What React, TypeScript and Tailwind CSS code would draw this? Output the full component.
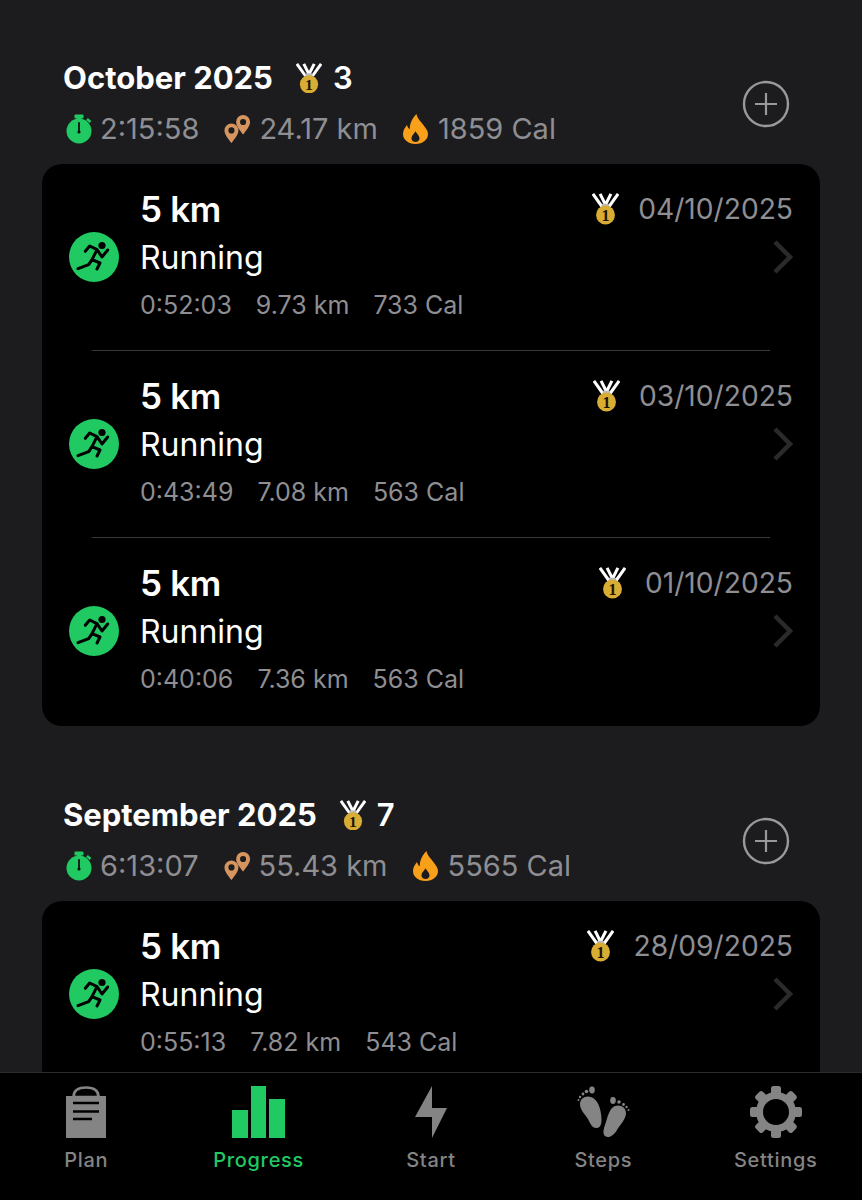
const GREEN = '#20c962';

const Medal = ({ size = 27 }: { size?: number }) => (
  <svg width={size} height={(size * 35) / 30} viewBox="0 0 30 35" className="shrink-0">
    <path d="M1 1 L11 15 M9 1 L15 13 M21 1 L15 13 M29 1 L19 15" stroke="#fff" strokeWidth="3.400" fill="none" />
    <rect x="11" y="12" width="8" height="3.500" fill="#b9b9b9" />
    <circle cx="15" cy="24.500" r="10.500" fill="#d9ad33" />
    <text x="15" y="31" textAnchor="middle" fontSize="18" fontWeight="700" fill="#1c1400" fontFamily="'Liberation Serif', serif">1</text>
  </svg>
);

const Timer = () => (
  <svg width="26" height="30" viewBox="0 0 26 30" className="shrink-0">
    <rect x="8.500" y="0.500" width="9" height="4" rx="1" fill={GREEN} />
    <rect x="11" y="3" width="4" height="4" fill={GREEN} />
    <path d="M21 5 L24.500 8" stroke={GREEN} strokeWidth="2.600" />
    <circle cx="13" cy="17" r="12.500" fill={GREEN} />
    <path d="M13 9 V18" stroke="#111" strokeWidth="1.800" strokeLinecap="round" />
    <circle cx="13" cy="18" r="1.600" fill="#111" />
  </svg>
);

const Pins = () => (
  <svg width="27" height="28" viewBox="0 0 29 30" className="shrink-0">
    <path fillRule="evenodd" fill="#d6955f" d="M8 9a7.500 7.500 0 0 0-7.500 7.500C.5 21 5 26 8 30c3-4 7.500-9 7.500-13.500A7.500 7.500 0 0 0 8 9Zm0 4.200a3.300 3.300 0 1 1 0 6.600 3.300 3.300 0 0 1 0-6.600Z" />
    <path fillRule="evenodd" fill="#d6955f" d="M20.500 0A7.500 7.500 0 0 0 13 7.500c0 4.500 4.500 9.500 7.500 13.500 3-4 7.500-9 7.500-13.500A7.500 7.500 0 0 0 20.500 0Zm0 4.200a3.300 3.300 0 1 1 0 6.600 3.300 3.300 0 0 1 0-6.600Z" />
  </svg>
);

const Flame = () => (
  <svg width="27" height="30" viewBox="0 0 26 30" className="shrink-0">
    <path fillRule="evenodd" fill="#f9a01b" d="M14 0c1 5 4 7 6.500 10.500C23 14 25.500 16.500 25.500 20c0 5.500-5 10-12.500 10S.5 25.500.5 20c0-4 2-6.500 4-9 .5 2 1.200 3.300 2.800 4.300C7 9.500 10 4 14 0Zm-1 17c-.8 2.500-4 4-4 7.500 0 2.300 1.800 3.500 4 3.500s4-1.200 4-3.500c0-3.500-3.200-5-4-7.500Z" />
  </svg>
);

const Runner = () => (
  <svg width="50" height="50" viewBox="0 0 50 50" className="shrink-0">
    <circle cx="25" cy="25" r="25" fill={GREEN} />
    <circle cx="33" cy="13.500" r="3.600" fill="#000" />
    <path d="M28 17.700 L23 27.700 L31 31 L28 37 M23 27.700 L19.700 32.700 L9 36.700 M28 17.700 L20.700 14 L16.300 19.300 M28 17.700 L33 25 L38.700 18" fill="none" stroke="#000" strokeWidth="3" strokeLinejoin="round" strokeLinecap="round" />
  </svg>
);

const Chevron = () => (
  <svg width="22" height="34" viewBox="0 0 22 34" className="shrink-0 mb-[3px] -mr-[1px]">
    <path d="M3 2 L18 17 L3 32" fill="none" stroke="#2a2a2c" strokeWidth="4.500" />
  </svg>
);

const PlusCircle = () => (
  <svg width="48" height="48" viewBox="0 0 48 48" className="shrink-0">
    <circle cx="24" cy="24" r="22" fill="none" stroke="#98989d" strokeWidth="2.400" />
    <path d="M24 13 V35 M13 24 H35" stroke="#98989d" strokeWidth="2.200" />
  </svg>
);

const PlanIcon = () => (
  <svg width="40" height="52" viewBox="0 0 40 52">
    <path d="M7.500 11 C7.500 4 13 1.500 20 1.500 S32.500 4 32.500 11 Z" fill="none" stroke="#848484" strokeWidth="2.600" />
    <path d="M0 10 H40 V52 H0 Z" fill="#848484" />
    <path d="M7 17 H33 M7 25.500 H33 M7 33 H26" stroke="#000" strokeWidth="2.400" />
  </svg>
);

const ProgressIcon = () => (
  <svg width="53" height="52" viewBox="0 0 53 52" fill={GREEN}>
    <rect x="0" y="24" width="16" height="28" />
    <rect x="19" y="0" width="15" height="52" />
    <rect x="37" y="13" width="16" height="39" />
  </svg>
);

const BoltIcon = () => (
  <svg width="32" height="52" viewBox="0 0 32 52" fill="#848484">
    <path d="M17 0 L0 31 H17 V52 L32 22 H17 Z" />
  </svg>
);

const StepsIcon = () => (
  <svg width="53" height="52" viewBox="0 0 53 52" fill="#848484">
    <path d="M3 18 C3 12 9 9 14 11 C20 13 23 20 24 28 C25 35 25 41 20 42 C15 42.500 13 37 11 33 C8 28 3 24 3 18 Z" />
    <path d="M49 27 C49 21 43 18 38 20 C33 22 31 29 29 36 C27 42 25 47 28 50 C32 53 37 49 40 44 C43 39 49 33 49 27 Z" />
    <ellipse cx="15" cy="4" rx="2.800" ry="3.400" />
    <circle cx="9.500" cy="5.500" r="1.800" />
    <circle cx="6" cy="8" r="1.400" />
    <circle cx="3" cy="11" r="1.200" />
    <circle cx="1.500" cy="14" r="1" />
    <ellipse cx="36" cy="14.500" rx="2.800" ry="3.400" />
    <circle cx="42" cy="16" r="1.800" />
    <circle cx="46.500" cy="18.500" r="1.400" />
    <circle cx="49.500" cy="21" r="1.200" />
    <circle cx="51.500" cy="24" r="1" />
  </svg>
);

const GearIcon = () => (
  <svg width="52" height="52" viewBox="0 0 52 52" fill="#848484">
    <circle cx="26" cy="26" r="16.500" fill="none" stroke="#848484" strokeWidth="7" />
    {[0, 45, 90, 135, 180, 225, 270, 315].map((deg) => (
      <rect key={deg} x="21" y="0" width="10" height="11" rx="2.500" transform={`rotate(${deg} 26 26)`} />
    ))}
  </svg>
);

type Run = { date: string; time: string; dist: string; cal: string };

const RunRow = ({ run }: { run: Run }) => (
  <div className="flex items-center pl-[27px] pr-[27px] pt-[21px] pb-[22px]">
    <Runner />
    <div className="flex-1 ml-[21px] min-w-0">
      <div className="flex items-center justify-between h-[48px]">
        <span className="text-[35px] font-semibold text-white tracking-[-0.3px]">5 km</span>
        <div className="flex items-center gap-[19px]">
          <Medal />
          <span className="text-[28.2px] text-[#8e8e93]">{run.date}</span>
        </div>
      </div>
      <div className="flex items-center justify-between h-[50px]">
        <span className="text-[32px] text-white">Running</span>
        <Chevron />
      </div>
      <div className="flex items-center gap-[24px] h-[45px] text-[25px] text-[#8e8e93]">
        <span>{run.time}</span>
        <span>{run.dist}</span>
        <span>{run.cal}</span>
      </div>
    </div>
  </div>
);

type Month = { title: string; medals: number; time: string; dist: string; cal: string; runs: Run[] };

const MonthBlock = ({ month }: { month: Month }) => (
  <section className="mb-[65px]">
    <div className="flex items-center justify-between pl-[21px] pr-[30px] pb-[10px]">
      <div>
        <div className="flex items-center h-[48px]">
          <h2 className="text-[31px] font-bold text-white">{month.title}</h2>
          <span className="ml-[23px]"><Medal size={26} /></span>
          <span className="ml-[11px] text-[31px] font-semibold text-white">{month.medals}</span>
        </div>
        <div className="flex items-center h-[52px] pt-[2px] text-[29px] text-[#8e8e93]">
          <span className="ml-[3px]"><Timer /></span>
          <span className="ml-[8px]">{month.time}</span>
          <span className="ml-[25px]"><Pins /></span>
          <span className="ml-[8px]">{month.dist}</span>
          <span className="ml-[24px]"><Flame /></span>
          <span className="ml-[9px]">{month.cal}</span>
        </div>
      </div>
      <PlusCircle />
    </div>
    <div className="bg-black rounded-[20px] pb-[2px]">
      {month.runs.map((run, i) => (
        <div key={run.date}>
          {i > 0 && <div className="h-px bg-[#38383a] ml-[50px] mr-[50px]" />}
          <RunRow run={run} />
        </div>
      ))}
    </div>
  </section>
);

const months: Month[] = [
  {
    title: 'October 2025', medals: 3, time: '2:15:58', dist: '24.17 km', cal: '1859 Cal',
    runs: [
      { date: '04/10/2025', time: '0:52:03', dist: '9.73 km', cal: '733 Cal' },
      { date: '03/10/2025', time: '0:43:49', dist: '7.08 km', cal: '563 Cal' },
      { date: '01/10/2025', time: '0:40:06', dist: '7.36 km', cal: '563 Cal' },
    ],
  },
  {
    title: 'September 2025', medals: 7, time: '6:13:07', dist: '55.43 km', cal: '5565 Cal',
    runs: [{ date: '28/09/2025', time: '0:55:13', dist: '7.82 km', cal: '543 Cal' }],
  },
];

const tabs = [
  { label: 'Plan', icon: <PlanIcon /> },
  { label: 'Progress', icon: <ProgressIcon />, active: true },
  { label: 'Start', icon: <BoltIcon /> },
  { label: 'Steps', icon: <StepsIcon /> },
  { label: 'Settings', icon: <GearIcon /> },
];

export default function App() {
  return (
    <div className="h-[1200px] flex flex-col bg-[#1c1c1e] overflow-hidden font-['Inter',sans-serif]">
      <main className="flex-1 min-h-0 overflow-hidden pt-[54px] pl-[42px] pr-[42px]">
        {months.map((m) => (
          <MonthBlock key={m.title} month={m} />
        ))}
      </main>
      <nav className="h-[128px] shrink-0 bg-black border-t border-[#2c2c2e] grid grid-cols-5 pt-[13px]">
        {tabs.map((t) => (
          <div key={t.label} className="flex flex-col items-center">
            <div className="h-[52px] flex items-center justify-center">{t.icon}</div>
            <span className={`mt-[7px] text-[20px] font-medium tracking-[0.7px] ${t.active ? 'text-[#20c962]' : 'text-[#848484]'}`}>
              {t.label}
            </span>
          </div>
        ))}
      </nav>
    </div>
  );
}
